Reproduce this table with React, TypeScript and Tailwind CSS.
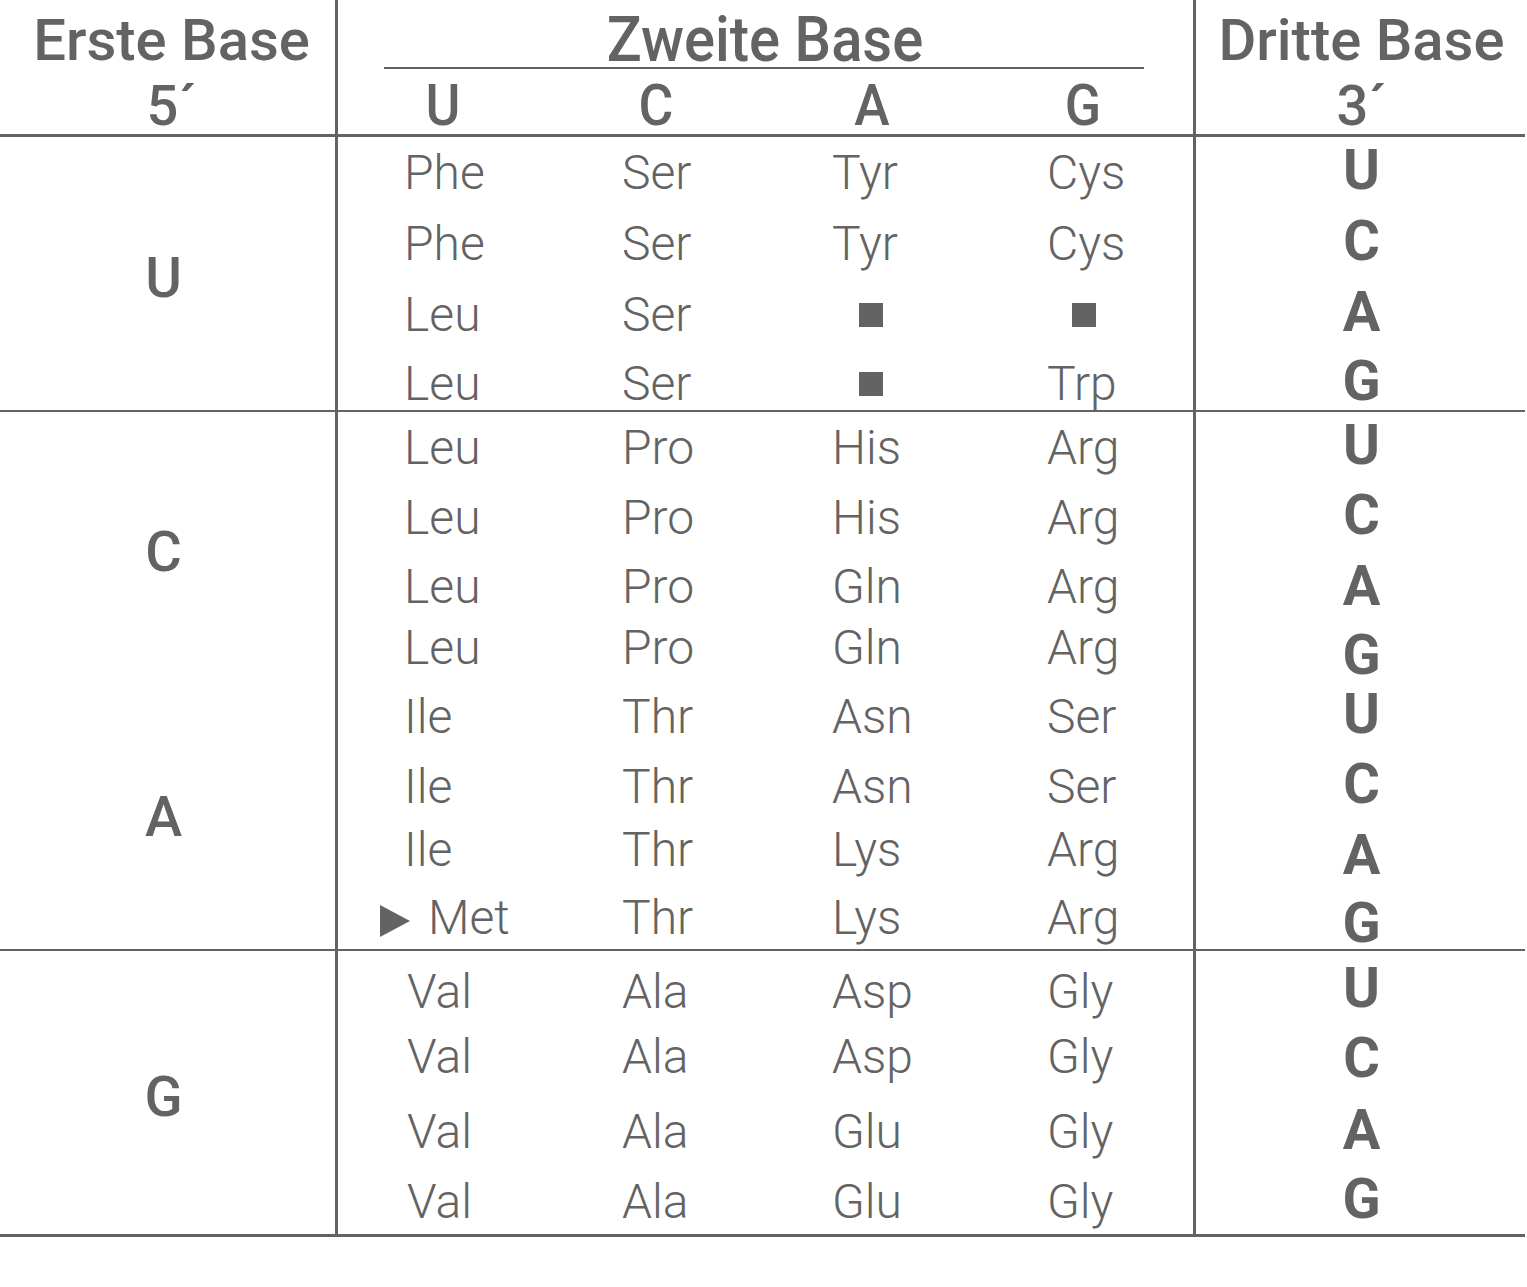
const ink = "#636363";

type Cell = string | null; // null = stop codon square

type Group = {
  bases: string[];
  height: string;
  midGaps: string[];
  thirdGaps: string[];
  rows: { cells: Cell[]; third: string; met?: boolean }[];
};

// amino rows are 60px, third-base rows 56px; the gaps above each one follow the original's uneven spacing
const groups: Group[] = [
  {
    bases: ["U"],
    height: "h-[273px]",
    midGaps: ["mt-[6px]", "mt-[11px]", "mt-[11px]", "mt-[9px]"],
    thirdGaps: ["mt-[5px]", "mt-[15px]", "mt-[15px]", "mt-[13px]"],
    rows: [
      { cells: ["Phe", "Ser", "Tyr", "Cys"], third: "U" },
      { cells: ["Phe", "Ser", "Tyr", "Cys"], third: "C" },
      { cells: ["Leu", "Ser", null, null], third: "A" },
      { cells: ["Leu", "Ser", null, "Trp"], third: "G" },
    ],
  },
  {
    bases: ["C", "A"],
    height: "h-[537px]",
    midGaps: ["mt-[6px]", "mt-[10px]", "mt-[9px]", "mt-[1px]", "mt-[9px]", "mt-[10px]", "mt-[3px]", "mt-[8px]"],
    thirdGaps: ["mt-[5px]", "mt-[14px]", "mt-[15px]", "mt-[13px]", "mt-[3px]", "mt-[14px]", "mt-[15px]", "mt-[12px]"],
    rows: [
      { cells: ["Leu", "Pro", "His", "Arg"], third: "U" },
      { cells: ["Leu", "Pro", "His", "Arg"], third: "C" },
      { cells: ["Leu", "Pro", "Gln", "Arg"], third: "A" },
      { cells: ["Leu", "Pro", "Gln", "Arg"], third: "G" },
      { cells: ["Ile", "Thr", "Asn", "Ser"], third: "U" },
      { cells: ["Ile", "Thr", "Asn", "Ser"], third: "C" },
      { cells: ["Ile", "Thr", "Lys", "Arg"], third: "A" },
      { cells: ["Met", "Thr", "Lys", "Arg"], third: "G", met: true },
    ],
  },
  {
    bases: ["G"],
    height: "h-[283px]",
    midGaps: ["mt-[11px]", "mt-[5px]", "mt-[15px]", "mt-[10px]"],
    thirdGaps: ["mt-[9px]", "mt-[14px]", "mt-[16px]", "mt-[13px]"],
    rows: [
      { cells: ["Val", "Ala", "Asp", "Gly"], third: "U" },
      { cells: ["Val", "Ala", "Asp", "Gly"], third: "C" },
      { cells: ["Val", "Ala", "Glu", "Gly"], third: "A" },
      { cells: ["Val", "Ala", "Glu", "Gly"], third: "G" },
    ],
  },
];

const cols = "grid grid-cols-[218px_210px_215px_1fr] pl-[66px]";

function Stop({ shift }: { shift: string }) {
  return <span className={`block w-[24px] h-[24px] bg-[#636363] ${shift}`} />;
}

function Block({ g }: { g: Group }) {
  return (
    <div className={`flex ${g.height} shrink-0`}>
      {/* FIRST BASE */}
      <div className="w-[335px] flex flex-col pt-[8px] pr-[8px] text-[56px] font-medium">
        {g.bases.map((b) => (
          <div key={b} className="flex-1 flex items-center justify-center">
            {b}
          </div>
        ))}
      </div>
      <div className="w-[3px] bg-[#636363]" />

      {/* AMINO ACIDS */}
      <div className="w-[855px]">
        {g.rows.map((r, i) => (
          <div key={i} className={`${cols} h-[60px] ${g.midGaps[i]} items-center text-[48px] font-light`}>
            {r.cells.map((c, j) =>
              c === null ? (
                <Stop key={j} shift={j === 2 ? "ml-[27px]" : "ml-[25px]"} />
              ) : r.met && j === 0 ? (
                <span key={j} className="flex items-center ml-[-24px]">
                  <svg width="30" height="32" viewBox="0 0 30 32" className="mt-[6px] mr-[18px]">
                    <path d="M0 0 L30 16 L0 32 Z" fill={ink} />
                  </svg>
                  {c}
                </span>
              ) : (
                <span key={j} className={c === "Val" ? "ml-[3px]" : ""}>
                  {c}
                </span>
              )
            )}
          </div>
        ))}
      </div>
      <div className="w-[3px] bg-[#636363]" />

      {/* THIRD BASE */}
      <div className="flex-1">
        {g.rows.map((r, i) => (
          <div
            key={i}
            className={`h-[56px] ${g.thirdGaps[i]} flex items-center justify-center text-[56px] font-bold`}
          >
            {r.third}
          </div>
        ))}
      </div>
    </div>
  );
}

function Rule({ h }: { h: string }) {
  return <div className={`w-[1525px] ${h} shrink-0 bg-[#636363]`} />;
}

export default function App() {
  return (
    <div
      className="w-[1527px] h-[1287px] bg-white text-[#636363] leading-none"
      style={{ fontFamily: "Roboto, 'Liberation Sans', sans-serif" }}
    >
      {/* HEADER */}
      <div className="flex h-[134px]">
        <div className="w-[335px] flex flex-col items-center pt-[7px] pl-[8px] text-[58px] font-medium leading-[66px]">
          <span>Erste Base</span>
          <span className="text-[56px]">5´</span>
        </div>
        <div className="w-[3px] bg-[#636363]" />
        <div className="w-[855px] flex flex-col">
          <div className="h-[67px] shrink-0 pt-[8px] flex justify-center">
            <span className="inline-block text-[63px] font-medium scale-x-[0.92]">Zweite Base</span>
          </div>
          <div className="ml-[46px] w-[760px] h-[2px] shrink-0 bg-[#636363]" />
          <div className="grid grid-cols-[210px_216px_216px_206px] mt-[7px] h-[58px] shrink-0 text-[58px] font-medium text-center">
            {["U", "C", "A", "G"].map((b) => (
              <span key={b} className="inline-block scale-x-[0.92]">
                {b}
              </span>
            ))}
          </div>
        </div>
        <div className="w-[3px] bg-[#636363]" />
        <div className="flex-1 flex flex-col items-center pt-[7px] text-[58px] font-medium leading-[66px]">
          <span>Dritte Base</span>
          <span className="text-[56px]">3´</span>
        </div>
      </div>
      <Rule h="h-[3px]" />

      <Block g={groups[0]} />
      <Rule h="h-[2px]" />
      <Block g={groups[1]} />
      <Rule h="h-[2px]" />
      <Block g={groups[2]} />
      <Rule h="h-[3px]" />
    </div>
  );
}
